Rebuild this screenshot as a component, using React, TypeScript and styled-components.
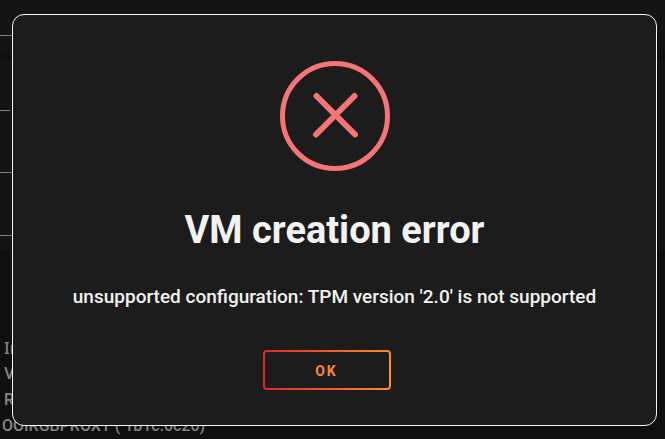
import React from "react";
import styled, { createGlobalStyle } from "styled-components";

const GlobalStyle = createGlobalStyle`
  * { box-sizing: border-box; }
  body {
    margin: 0;
    background: #0f0f0f;
    color: #858585;
    font-family: Roboto, "Noto Sans", sans-serif;
    overflow: hidden;
  }
`;

const Page = styled.div`
  position: relative;
  min-height: 100vh;
`;

const Backdrop = styled.main`
  display: flex;
  flex-direction: column;
  height: 100vh;
  overflow: hidden;
`;

const FormPanel = styled.section`
  flex: none;
  background: #141414;
`;

const Field = styled.div<{ $height: number; $short?: boolean }>`
  height: ${(p) => p.$height}px;
  width: ${(p) => (p.$short ? "10px" : "90%")};
  border-bottom: 1px solid #808080;
`;

const PanelGap = styled.div`
  height: 12px;
  margin-top: 13px;
  background: #101010;
`;

const PanelEnd = styled.div`
  height: 13px;
`;

const DeviceList = styled.ul`
  list-style: none;
  margin: 0;
  padding: 86px 0 0 4px;
  font-size: 16px;
  line-height: 26px;
  font-weight: 500;
  white-space: nowrap;
`;

const Device = styled.li<{ $serif?: boolean }>`
  height: 26px;
  font-family: ${(p) => (p.$serif ? '"Noto Sans", sans-serif' : "inherit")};
`;

const DeviceTail = styled.li`
  margin-left: -2px;
`;

const Overlay = styled.div`
  position: absolute;
  inset: 0;
  padding: 14px 8px 13px 12px;
  display: flex;
`;

const Dialog = styled.section`
  flex: 1;
  display: flex;
  flex-direction: column;
  align-items: center;
  padding: 46px 24px 35px;
  border: 1px solid #f5f5f5;
  border-radius: 12px;
  background: #1c1c1c;
  color: #f2f2f2;
  text-align: center;
`;

const ErrorIcon = styled.svg`
  flex: none;
  width: 110px;
  height: 110px;
`;

const Title = styled.h1`
  margin: 35px 0 0;
  font-size: 38px;
  line-height: 48px;
  font-weight: 700;
`;

const Message = styled.p`
  margin: 30px 0 0;
  font-size: 19px;
  line-height: 26px;
  font-weight: 500;
`;

const ConfirmButton = styled.button`
  width: 128px;
  height: 40px;
  margin: 40px 16px 0 0;
  padding: 2px 0 0;
  border: 2px solid transparent;
  border-radius: 4px;
  background:
    linear-gradient(#1c1c1c, #1c1c1c) padding-box,
    linear-gradient(90deg, #e52528, #ff8c2e) border-box;
  color: #ff8733;
  font-family: Roboto, "Noto Sans", sans-serif;
  font-size: 14px;
  line-height: 20px;
  font-weight: 700;
  letter-spacing: 2px;
  cursor: pointer;
`;

export default function App() {
  return (
    <Page>
      <GlobalStyle />
      <Backdrop aria-hidden="true">
        <FormPanel>
          <Field $height={36} />
          <PanelGap />
          <Field $height={50} $short />
          <Field $height={62} />
          <Field $height={63} />
          <PanelEnd />
        </FormPanel>
        <DeviceList>
          <Device $serif>In</Device>
          <Device>V</Device>
          <Device>R</Device>
          <DeviceTail>OOIRGBPROXY ( 1b1c:0c20)</DeviceTail>
        </DeviceList>
      </Backdrop>
      <Overlay>
        <Dialog role="alertdialog" aria-modal="true" aria-labelledby="error-title" aria-describedby="error-message">
          <ErrorIcon viewBox="0 0 110 110" fill="none" stroke="#f77474" aria-hidden="true">
            <circle cx="55" cy="55" r="52.5" strokeWidth="5" />
            <path d="M36.5 35L75 73.5M74.5 35L36 73.5" strokeWidth="6" strokeLinecap="round" />
          </ErrorIcon>
          <Title id="error-title">VM creation error</Title>
          <Message id="error-message">unsupported configuration: TPM version '2.0' is not supported</Message>
          <ConfirmButton type="button">OK</ConfirmButton>
        </Dialog>
      </Overlay>
    </Page>
  );
}
